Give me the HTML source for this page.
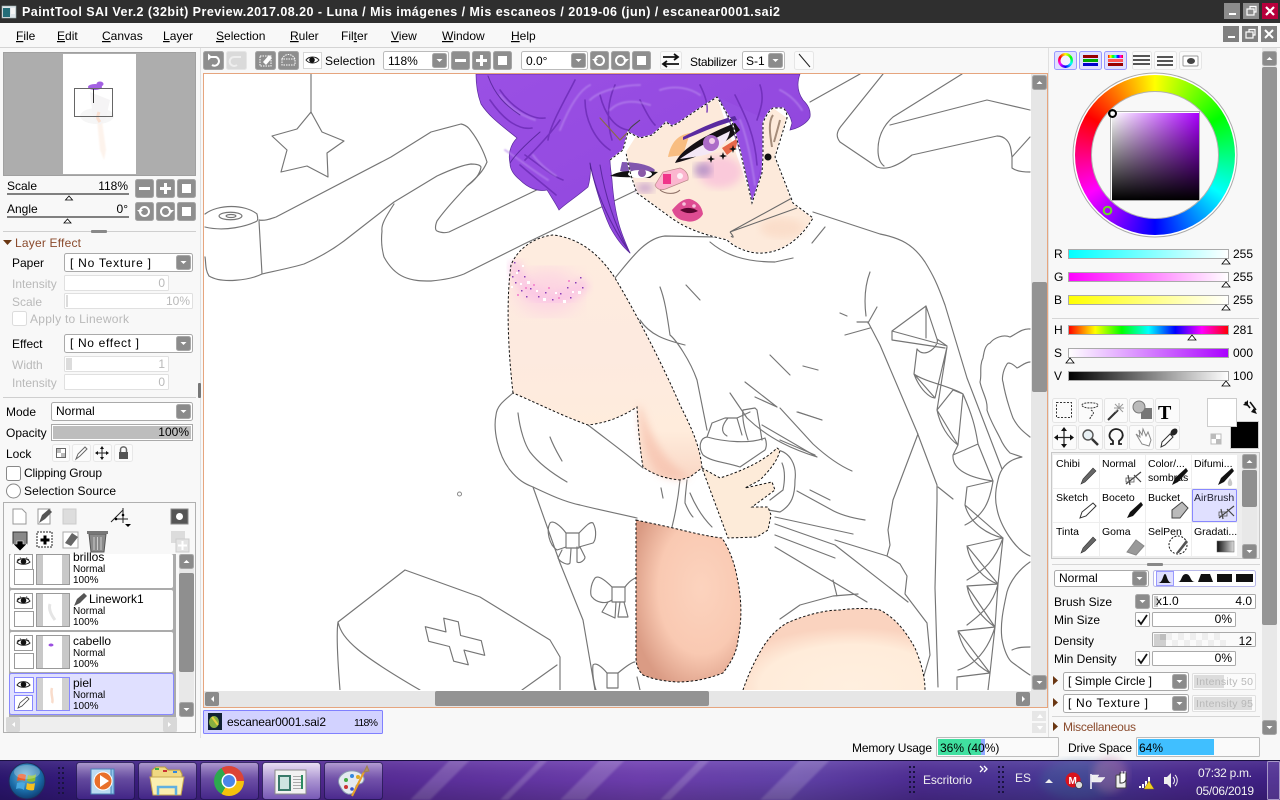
<!DOCTYPE html>
<html><head><meta charset="utf-8"><title>PaintTool SAI</title>
<style>
html,body{margin:0;padding:0;width:1280px;height:800px;overflow:hidden;background:#f8f8f8}
svg{display:block;font-family:"Liberation Sans",sans-serif;font-size:12px}
.g{fill:#b9b9b9}.b{fill:#000}
.line{fill:none;stroke:#757575;stroke-width:1.150;stroke-linecap:round;stroke-linejoin:round}
.u{text-decoration:underline}
.br{font-size:10.5px}
.n{font-size:10px}
</style></head><body>
<svg width="1280" height="800" viewBox="0 0 1280 800" xmlns="http://www.w3.org/2000/svg">
<defs>
<g id="dd"><rect x=".5" y=".5" width="14" height="14" rx="2" fill="#8b8b8b" stroke="#a8a8a8"/><path d="M4.5 6h6l-3 3z" fill="#fff"/></g>
<g id="du"><rect x=".5" y=".5" width="14" height="14" rx="2" fill="#8b8b8b" stroke="#a8a8a8"/><path d="M4.5 9h6l-3-3z" fill="#fff"/></g>
<g id="gb"><rect x=".5" y=".5" width="18" height="18" rx="2" fill="#8e8e8e" stroke="#a5a5a5"/></g>
<g id="eye"><rect x=".5" y=".5" width="18" height="15" fill="#fff" stroke="#9a9a9a"/><path d="M3 8C6 3.500 13 3.500 16 8C13 11 6 11 3 8Z" fill="#fff" stroke="#222"/><circle cx="9.500" cy="7.500" r="2.800" fill="#111"/><path d="M3 6.500L5 5M6 4.500L6.500 3.500M13 4.500L12.500 3.500M15 6L13.500 5" stroke="#222"/></g>
<g id="pen"><path d="M3 18L5 13L15 2L18 5L7 16Z" fill="#666" stroke="#333" stroke-width=".6"/></g>
<g id="air"><path d="M2 16L17 4M6 17L4 7M17 14L10 7" stroke="#444" stroke-width="1.200" fill="none"/><rect x="2" y="10" width="8" height="4" fill="none" stroke="#555" stroke-width=".8"/></g>
<linearGradient id="sq1"><stop offset="0" stop-color="#fff"/><stop offset="1" stop-color="#aa00ff"/></linearGradient>
<linearGradient id="sq2" x2="0" y2="1"><stop offset="0" stop-color="#000" stop-opacity="0"/><stop offset="1" stop-color="#000"/></linearGradient>
<linearGradient id="r"><stop offset="0" stop-color="#0ff"/><stop offset="1" stop-color="#fff"/></linearGradient>
<linearGradient id="gg"><stop offset="0" stop-color="#f0f"/><stop offset="1" stop-color="#fff"/></linearGradient>
<linearGradient id="bb"><stop offset="0" stop-color="#ff0"/><stop offset="1" stop-color="#fff"/></linearGradient>
<linearGradient id="h"><stop offset="0" stop-color="#f00"/><stop offset=".167" stop-color="#ff0"/><stop offset=".333" stop-color="#0f0"/><stop offset=".5" stop-color="#0ff"/><stop offset=".667" stop-color="#00f"/><stop offset=".833" stop-color="#f0f"/><stop offset="1" stop-color="#f00"/></linearGradient>
<linearGradient id="s"><stop offset="0" stop-color="#fff"/><stop offset="1" stop-color="#aa00ff"/></linearGradient>
<linearGradient id="v"><stop offset="0" stop-color="#000"/><stop offset="1" stop-color="#fff"/></linearGradient>
<linearGradient id="grad"><stop offset="0" stop-color="#111"/><stop offset="1" stop-color="#ddd"/></linearGradient>
<linearGradient id="tb" x1="0" x2="1"><stop offset="0" stop-color="#2c1672"/><stop offset=".05" stop-color="#351a7e"/><stop offset=".3" stop-color="#5a2d9c"/><stop offset=".5" stop-color="#7140b4"/><stop offset=".62" stop-color="#6444ae"/><stop offset=".72" stop-color="#4f2d97"/><stop offset=".84" stop-color="#4a3a9a"/><stop offset=".92" stop-color="#4a2890"/><stop offset="1" stop-color="#3f2088"/></linearGradient>
<linearGradient id="tbs" x2="0" y2="1"><stop offset="0" stop-color="#fff" stop-opacity=".1"/><stop offset=".5" stop-color="#000" stop-opacity=".05"/><stop offset="1" stop-color="#000" stop-opacity=".2"/></linearGradient>
<linearGradient id="tbtn" x2="0" y2="1"><stop offset="0" stop-color="#d8c8ea" stop-opacity=".7"/><stop offset=".45" stop-color="#9078c0" stop-opacity=".5"/><stop offset="1" stop-color="#5030a0" stop-opacity=".5"/></linearGradient>
<linearGradient id="tbta" x2="0" y2="1"><stop offset="0" stop-color="#f2eaf8" stop-opacity=".95"/><stop offset=".5" stop-color="#b8a4dc" stop-opacity=".85"/><stop offset="1" stop-color="#8062c0" stop-opacity=".85"/></linearGradient>
<linearGradient id="hairg" x1="0" y1="0" x2="1" y2="1"><stop offset="0" stop-color="#9a50e4"/><stop offset=".5" stop-color="#944ae0"/><stop offset="1" stop-color="#8a42d6"/></linearGradient>
<radialGradient id="thighg" cx=".62" cy=".42" r=".68"><stop offset="0" stop-color="#fcd3be"/><stop offset=".6" stop-color="#f9c9b2"/><stop offset="1" stop-color="#da9b84"/></radialGradient>
<radialGradient id="thigh2" cx=".6" cy=".95" r=".72"><stop offset="0" stop-color="#ffefdf"/><stop offset=".7" stop-color="#ffecda"/><stop offset="1" stop-color="#fad3bf"/></radialGradient>
<linearGradient id="armg" x2="0" y2="1"><stop offset="0" stop-color="#feecdf"/><stop offset=".5" stop-color="#fdeadf"/><stop offset=".8" stop-color="#ffecdc"/><stop offset="1" stop-color="#f9d6c4"/></linearGradient>
<radialGradient id="orb" cx=".45" cy=".35" r=".7"><stop offset="0" stop-color="#70b8d8"/><stop offset=".6" stop-color="#1a6ca8"/><stop offset="1" stop-color="#0c3468"/></radialGradient>
<clipPath id="cv"><rect x="204" y="74" width="827" height="616"/></clipPath>
<filter id="b4"><feGaussianBlur stdDeviation="4"/></filter>
<filter id="b8"><feGaussianBlur stdDeviation="9"/></filter>
<filter id="b1"><feGaussianBlur stdDeviation="1"/></filter>
<filter id="bs"><feGaussianBlur stdDeviation=".7"/></filter>
</defs>

<!-- base -->
<rect width="1280" height="800" fill="#f8f8f8"/>
<!-- title bar -->
<rect width="1280" height="23" fill="#2f2f2f"/>
<rect x="2" y="6" width="14" height="12" fill="#dfe6ea" stroke="#9aa" stroke-width=".6"/><rect x="3" y="8" width="7" height="9" fill="#236d78"/><rect x="11" y="8" width="4" height="6" fill="#f4f4f4"/>
<text x="22" y="16" fill="#fff" font-weight="bold" font-size="12.5" textLength="758">PaintTool SAI Ver.2 (32bit) Preview.2017.08.20 - Luna / Mis imágenes / Mis escaneos / 2019-06 (jun) / escanear0001.sai2</text>
<rect x="1224" y="3" width="16" height="16" fill="#8c8c8c"/><rect x="1229" y="13" width="7" height="2" fill="#fff"/>
<rect x="1243" y="3" width="16" height="16" fill="#8c8c8c"/><rect x="1247" y="9" width="7" height="6" fill="none" stroke="#fff" stroke-width="1.200"/><path d="M1250 9V6.500H1256V12H1254" fill="none" stroke="#fff" stroke-width="1.200"/>
<rect x="1262" y="3" width="16" height="16" fill="#b8003c"/><path d="M1266 7L1274 15M1274 7L1266 15" stroke="#fff" stroke-width="2.200"/>
<!-- menu bar -->
<rect y="23" width="1280" height="24" fill="#f8f8f8"/>
<rect y="47" width="1280" height="1" fill="#d4d4d4"/>
<g font-size="12">
<text x="16" y="40"><tspan class="u">F</tspan>ile</text>
<text x="57" y="40"><tspan class="u">E</tspan>dit</text>
<text x="102" y="40"><tspan class="u">C</tspan>anvas</text>
<text x="163" y="40"><tspan class="u">L</tspan>ayer</text>
<text x="216" y="40"><tspan class="u">S</tspan>election</text>
<text x="290" y="40"><tspan class="u">R</tspan>uler</text>
<text x="341" y="40">Fil<tspan class="u">t</tspan>er</text>
<text x="391" y="40"><tspan class="u">V</tspan>iew</text>
<text x="442" y="40"><tspan class="u">W</tspan>indow</text>
<text x="511" y="40"><tspan class="u">H</tspan>elp</text>
</g>
<rect x="1223" y="26" width="16" height="16" fill="#808080"/><rect x="1228" y="36" width="7" height="2" fill="#fff"/>
<rect x="1242" y="26" width="16" height="16" fill="#808080"/><rect x="1246" y="32" width="7" height="6" fill="none" stroke="#fff" stroke-width="1.200"/><path d="M1249 32V29.500H1255V35H1253" fill="none" stroke="#fff" stroke-width="1.200"/>
<rect x="1261" y="26" width="16" height="16" fill="#808080"/><path d="M1265 30L1273 38M1273 30L1265 38" stroke="#fff" stroke-width="2"/>

<!-- toolbar -->
<g>
<rect x="203.500" y="51.500" width="20" height="18" rx="2" fill="#8e8e8e" stroke="#a5a5a5"/><path d="M208 57H216A4.500 4.500 0 1 1 212 65" fill="none" stroke="#fff" stroke-width="2"/><path d="M208 53.500v7l4-3.500z" fill="#fff"/>
<rect x="226.500" y="51.500" width="20" height="18" rx="2" fill="#dadada" stroke="#e6e6e6"/><path d="M241 57H234A4.500 4.500 0 1 0 237 65" fill="none" stroke="#eee" stroke-width="2"/>
<rect x="255.500" y="51.500" width="20" height="18" rx="2" fill="#8e8e8e" stroke="#a5a5a5"/><rect x="260" y="56" width="11" height="10" fill="none" stroke="#fff" stroke-dasharray="1.500 1"/><path d="M263 62L269 55L272 58L266 65Z" fill="#fff"/>
<rect x="278.500" y="51.500" width="20" height="18" rx="2" fill="#8e8e8e" stroke="#a5a5a5"/><path d="M282 59C285 53 292 53 295 59M282 59V65H295V59Z" fill="none" stroke="#fff" stroke-dasharray="1.500 1"/>
<rect x="303.500" y="52.500" width="18" height="16" fill="#fff" stroke="#d6d6d6"/><path d="M306 60C309 56 316 56 319 60C316 64 309 64 306 60Z" fill="none" stroke="#222"/><circle cx="312" cy="60" r="2.800" fill="#111"/>
<text x="325" y="65" textLength="50">Selection</text>
<rect x="383.500" y="51.500" width="65" height="18" rx="2" fill="#fff" stroke="#bbb"/><text x="388" y="65">118%</text><use href="#dd" x="432" y="53"/>
<use href="#gb" x="451" y="51"/><rect x="455" y="59" width="11" height="3" fill="#fff"/>
<use href="#gb" x="472" y="51"/><path d="M476 59h4v-4h3v4h4v3h-4v4h-3v-4h-4z" fill="#fff"/>
<use href="#gb" x="493" y="51"/><rect x="498" y="56" width="9" height="9" fill="#fff"/>
<rect x="521.500" y="51.500" width="66" height="18" rx="2" fill="#fff" stroke="#bbb"/><text x="526" y="65">0.0°</text><use href="#dd" x="571" y="53"/>
<use href="#gb" x="590" y="51"/><circle cx="599.500" cy="60.500" r="4.500" fill="none" stroke="#fff" stroke-width="2"/><path d="M592 59h6l-3 3z" fill="#fff"/>
<use href="#gb" x="611" y="51"/><circle cx="620.500" cy="60.500" r="4.500" fill="none" stroke="#fff" stroke-width="2"/><path d="M623 59h6l-3 3z" fill="#fff"/>
<use href="#gb" x="632" y="51"/><rect x="637" y="56" width="9" height="9" fill="#fff"/>
<rect x="660.500" y="51.500" width="21" height="18" rx="2" fill="#fbfbfb" stroke="#e6e6e6"/><path d="M663 57H678M674 54L678 57L674 60M664 64H679M667 61L663 64L667 67" fill="none" stroke="#111" stroke-width="1.800"/>
<text x="690" y="66" textLength="47">Stabilizer</text>
<rect x="742.500" y="51.500" width="42" height="18" rx="2" fill="#fff" stroke="#bbb"/><text x="746" y="65">S-1</text><use href="#dd" x="768" y="53"/>
<rect x="794.500" y="51.500" width="19" height="18" rx="2" fill="#fbfbfb" stroke="#e6e6e6"/><path d="M799 54L810 67" stroke="#222"/>
</g>

<!-- canvas -->
<rect x="203.500" y="73.500" width="844" height="634" fill="#fff" stroke="#e6a57e"/>
<g clip-path="url(#cv)">
<!-- line art background -->
<g class="line">
<path d="M311 74V112"/>
<path d="M311 112L322 132L344 141L327 153L328 177L307 166L281 172L287 150L272 136L297 129Z"/>
<path d="M205 214C218 204 245 204 257 214C258 218 258 220 257 221C248 226 225 232 205 227"/>
<path d="M219 216C220 211 241 211 242 216C241 221 220 221 219 216Z"/><path d="M226 216C227 214 235 214 236 216C235 218 227 218 226 216Z"/>
<path d="M259 221L262 274C250 280 222 284 209 276C205 270 206 262 205 257"/>
<path d="M259 220C265 221 270 219 276 217L391 157L431 132L461 124C466 125 469 128 471 131C478 140 484 152 487 162C483 172 476 178 467 186C458 196 446 208 437 221C435 226 435 230 437 231C441 233 445 233 449 232L547 185"/>
<path d="M262 274C275 271 290 268 304 264C318 258 332 250 344 241L394 202L437 176C450 170 462 165 471 164C477 164 480 165 481 167C480 175 474 181 467 186"/>
<path d="M394 204C385 218 381 225 382 231C381 240 382 250 384 257C390 268 397 274 404 277C413 281 422 281 431 281C442 280 454 278 464 274L524 244L637 190"/>
<path d="M615 278C630 260 645 238 665 236L717 237"/>
<path d="M710 242C725 255 745 262 775 262L793 258M812 243L825 227"/>
<path d="M813 212L880 234C900 238 913 244 925 262C933 275 937 283 945 305L967 378L1002 469"/>
<path d="M860 74L810 102M883 74L842 125C836 132 836 137 840 142L877 167C885 170 895 168 912 155L997 136C1005 136 1010 142 1011 150L1012 157L1030 137"/>
<path d="M962 74L893 117C884 125 878 135 878 150C878 158 880 163 884 166M890 125L987 100L1030 110M1012 157V168C1016 171 1022 172 1030 172"/>
<path d="M870 272C865 285 864 300 866 316M877 307L868 323M857 322H868L880 345L917 432L937 485V501L935 588L938 687"/>
<path d="M840 313L847 316M803 366L818 370M798 412L822 420M780 408L813 444C825 455 838 465 852 471M780 440L815 455"/>
<path d="M918 434L893 500L888 530L890 545L887 556"/>
<path d="M938 487L953 499"/>
<path d="M797 491L830 509C840 515 852 518 865 520M810 490L830 500M775 517L853 534M775 524L835 545L908 602M775 535L835 558M775 547L867 602M835 540L887 556L900 564L907 576L905 594L927 623L930 655L922 682"/>
<path d="M780 619L800 605L833 596L858 594M833 580L837 596"/>
<!-- lacing -->
<path d="M892 331L926 306L937 339L947 346L892 331L892 340L945 348M926 306V338M917 349L914 374L935 398L947 347L937 410L953 390L963 394L958 445L937 410C940 425 948 438 958 445L953 455C952 470 970 478 993 481L978 444L953 455M963 394C972 415 975 425 978 444M993 481L967 487L965 505L1003 538L967 546L998 584L967 586L995 627L958 631L990 673L957 677V690M993 481C990 500 985 515 965 525M1003 538C995 560 985 570 967 580M998 584C993 605 980 615 967 625M995 627C988 650 975 665 958 670M965 505C970 525 990 535 1003 538M967 546C970 565 985 580 998 584M967 586C970 605 985 620 995 627M958 631C962 650 975 665 990 673M914 374C925 382 950 386 963 394M917 349C925 360 940 345 937 339M1003 538L998 584L995 627L990 673L988 690M914 374C920 390 930 398 935 398"/>
<!-- flower -->
<path d="M1030 329C1022 328 1015 335 1010 337C1003 334 994 338 990 343C985 345 984 352 983 358C979 366 982 375 980 382C982 392 988 400 987 410C990 420 996 430 1000 438C1003 445 1007 450 1010 453L1022 457C1006 460 1000 470 998 480C994 495 996 505 997 509C1000 525 1015 550 1030 556"/>
<path d="M1030 362C1025 362 1020 367 1017 368C1012 363 1008 362 1007 364C1002 372 1002 380 1003 382C1006 400 1013 418 1013 418C1018 428 1025 433 1030 437M1030 562C1018 570 1010 582 1007 592C1003 610 1000 625 1002 639C1004 650 1008 660 1013 663C1020 668 1025 672 1030 675M1012 650C1018 647 1025 647 1030 647"/>
<!-- lower-left figure lines -->
<path d="M513 393C505 400 497 405 496 415C493 430 498 455 510 470C518 480 525 484 533 487C550 495 565 502 580 505C600 510 620 514 637 518"/>
<path d="M588 425C610 442 628 455 643 468"/>
<path d="M518 413C520 430 525 445 530 452C540 465 555 475 567 482M550 437C555 450 560 457 562 461M661 488L663 498"/>
<path d="M680 480C678 500 675 515 672 527M687 480C686 490 685 497 685 503C688 510 690 514 693 517M690 493C695 505 703 518 712 527"/>
<path d="M533 487L560 563L583 620L595 690"/>
<path d="M566 533H579V548H566Z"/><path d="M566 533C560 525 553 520 550 523C546 530 549 545 557 550L566 547M579 533C585 527 590 521 593 523C597 530 596 540 593 543L579 547"/><path d="M562 550L558 558C560 562 568 566 570 563L571 549M577 547V562C580 564 585 560 585 557L580 547"/>
<path d="M612 587H625V602H612Z"/><path d="M612 587C605 580 598 575 595 578C590 585 590 595 592 597C596 602 605 605 612 600M625 587C630 580 636 577 640 577"/><path d="M608 602L602 612L615 618L616 602M620 602L618 617H628L624 602"/>
<path d="M607 673H618V688H607Z"/><path d="M607 673C602 667 596 662 593 665C592 672 594 685 596 690M618 673C624 668 632 662 635 662"/>
<path d="M637 677L640 690"/>
<path d="M405 570L338 622C336 635 338 665 340 690M405 570L480 597L550 640L560 657V690M338 622C342 640 360 655 420 690M522 690L557 665"/>
<path d="M443.700 618.200L458.300 621.800L460.600 635.500L481.300 640.700L484.700 655.300L464 650.100L468.300 664.800L453.700 661.200L449.400 646.500L428.700 641.300L425.300 626.700L446 631.900Z"/>
<!-- upper-chest lines -->
<path d="M660 287C665 300 667 315 670 335C676 340 690 360 697 380L707 430M640 320C650 335 665 340 685 345M730 393L747 418C770 440 795 450 817 457M745 382L777 407M755 397L777 407M797 412L822 420M762 425L817 457"/>
<path d="M686 285L700 300M770 355L790 375M845 335L870 328"/>
<!-- mug -->
<path d="M703 455C698 447 700 438 707 437C725 442 750 444 765 438C768 445 765 450 765 450L740 467C725 462 712 462 703 455Z"/>
<path d="M707 437L712 423L725 418L737 418L742 435M743 410L755 408L757 410L762 440M737 418L750 412M728 418C722 425 720 432 727 436M743 410C742 418 744 428 748 440"/>
<path d="M777 450C790 452 797 465 795 480C795 495 792 505 780 512L768 510M782 463C785 470 785 480 783 490L770 500"/>
</g>
<!-- skin -->
<path d="M626 152C628 168 634 185 637 193L670 217C685 228 700 233 715 237L727 240C735 248 750 254 763 253C782 252 800 240 813 218L793 203L775 157L787 118L773 108L763 123L763 157L753 203L717 97L640 130Z" fill="#fdeadb"/>
<ellipse cx="720" cy="172" rx="22" ry="16" fill="#fac9da" filter="url(#b4)"/>
<ellipse cx="703" cy="170" rx="9" ry="7" fill="#a685c2" filter="url(#b4)" opacity=".75"/>
<ellipse cx="645" cy="188" rx="9" ry="5" fill="#bb90c8" filter="url(#b4)" opacity=".75"/>
<ellipse cx="782" cy="228" rx="22" ry="10" fill="#f9d6c0" filter="url(#b4)" opacity=".6"/>
<path d="M513 393C508 350 506 300 511 265C518 248 535 237 553 235C580 238 600 255 615 278C640 320 665 370 680 405C690 425 700 445 702 468L690 477L680 480C660 478 650 472 643 467C640 450 638 425 637 407C620 418 605 423 588 425C560 415 535 402 513 393Z" fill="url(#armg)"/>
<ellipse cx="548" cy="292" rx="32" ry="22" fill="#fdd5e2" filter="url(#b8)"/>
<path d="M638 407C640 440 645 460 660 475C675 480 680 480 690 477C660 460 650 430 640 405Z" fill="#f6c0ac" filter="url(#b4)" opacity=".7"/>
<path d="M702 468L720 478C745 470 765 460 777 448L780 450C778 460 770 470 760 480L745 488L772 482L775 490L752 507L768 507L771 515L768 530L757 537L728 538Z" fill="#fdebd9"/>
<path d="M636 520C650 523 660 525 673 528C690 532 705 536 722 538C730 550 735 565 737 577C742 600 742 620 738 640C737 650 733 660 723 673C705 680 690 682 677 682C665 681 655 680 643 675C638 670 636 665 636 657Z" fill="url(#thighg)"/>
<path d="M743 690C748 675 755 660 763 647C770 636 778 628 787 623C805 615 825 610 840 610C855 608 870 608 880 610C895 618 905 630 915 648C920 660 925 675 925 690Z" fill="url(#thigh2)"/>
<!-- hair -->
<path d="M476 74C476 85 478 96 481 104C490 118 505 128 517 138C510 145 508 155 510 163C510 170 515 176 520 180C528 188 538 192 547 190C552 198 556 204 559 210C565 204 575 198 588 187C590 180 591 172 590 163C592 175 600 205 610 227C617 240 624 248 630 253C622 235 615 220 612 180C611 172 610 165 610 160L623 150L628 132L640 138L652 135L660 128L666 122L672 126L678 123L697 110L717 97L732 122L740 150L752 203L762 173L763 157V123C766 115 770 110 773 108H783C788 112 791 118 792 123L790 130C800 128 808 122 810 117C811 110 808 105 803 100C798 93 796 85 800 74Z" fill="url(#hairg)" stroke="#5a2a9c" stroke-width=".7"/>
<path d="M717 97L763 118V157L752 203L740 150L732 122Z" fill="#9650e2"/>
<g fill="none" stroke-linecap="round">
<path d="M490 100C505 122 520 130 532 128M500 90C510 105 530 120 545 118M525 155C540 165 550 175 563 180M520 165C535 178 548 188 556 195M585 100C585 120 595 140 610 150M600 95C605 115 615 128 628 130M640 100C645 110 650 120 655 125M700 85C705 95 708 105 707 112M760 85C765 100 760 110 757 120M560 120C550 135 530 155 525 160M575 80C565 100 550 125 548 140M615 85C608 100 606 120 612 140M735 95C745 115 755 135 757 165" stroke="#6a2ab4" stroke-width="1.600" opacity=".8"/>
<path d="M533 155C540 165 550 172 556 176M505 150C520 160 535 172 548 180M560 130C570 105 580 90 590 85M590 100C600 90 625 85 640 85M660 90C675 85 690 88 700 95M740 120C748 140 752 165 755 185M780 90C790 95 797 102 802 110M500 95C510 108 520 115 535 120M610 110C620 100 635 100 650 105" stroke="#b98aee" stroke-width="2" opacity=".6" filter="url(#bs)"/>
<path d="M488 76C495 95 505 105 520 115M600 165C605 195 615 225 628 250M590 163C595 190 610 225 630 253M510 163C515 155 525 145 540 132M720 100C735 130 745 165 752 203" stroke="#4d2090" stroke-width="1" opacity=".8"/>
<path d="M600 118L620 140L628 132" stroke="#8a6a4a" stroke-width="1.200"/>
</g>
<!-- face details -->
<path d="M622 162C635 162 650 165 655 170L650 178L620 171Z" fill="#6b3ca6" opacity=".85"/>
<path d="M612 175C620 170 640 170 658 172L650 178C635 177 625 178 610 176Z" fill="#111"/>
<ellipse cx="640" cy="174" rx="12" ry="4" fill="#fff"/><circle cx="642" cy="173" r="4" fill="#8a5aa8"/>
<path d="M668 157C671 142 678 135 690 133L683 155Z" fill="#f7b877" opacity=".9"/>
<path d="M675 163C682 148 705 135 735 123L740 130C722 146 700 157 675 163Z" fill="#151015"/>
<path d="M680 159C692 150 712 140 730 131C727 145 716 153 700 156Z" fill="#f4e8f6"/><circle cx="711" cy="143" r="8" fill="#ac6cc8"/><circle cx="712" cy="141" r="3" fill="#f2cde8"/>
<path d="M683 137C700 128 718 120 735 116L737 120C718 125 700 133 683 140Z" fill="#5a2aa0"/>
<path d="M722 148L738 138L736 148L727 155Z" fill="#e2502e" opacity=".85"/>
<g fill="#111"><path d="M711 155L712 158L715 159L712 160L711 163L710 160L707 159L710 158Z"/><path d="M723 152L724 155L727 156L724 157L723 160L722 157L719 156L722 155Z"/><path d="M733 145L734 148L737 149L734 150L733 153L732 150L729 149L732 148Z"/></g>
<path d="M655 185L663 172L680 168C686 170 689 175 688 180L668 188C662 191 657 190 655 185Z" fill="#fbb6cf" stroke="#bb8a8a" stroke-width=".7"/>
<rect x="663" y="174" width="8" height="10" fill="#f0358a"/><circle cx="680" cy="176" r="3" fill="#fff" opacity=".8"/>
<path d="M660 190C665 194 675 195 680 190" fill="none" stroke="#8d6f65" stroke-width="1.100"/>
<path d="M672 210C678 203 684 198 690 199C697 201 702 206 703 214C700 220 692 223 686 221C678 220 674 216 672 210Z" fill="#de4c92"/><path d="M680 210C686 207 692 207 698 211C692 214 686 214 680 210Z" fill="#5a0530"/><circle cx="684" cy="204" r="1.800" fill="#f7c2dc"/><circle cx="694" cy="206" r="1.800" fill="#f7c2dc"/>
<path d="M773 115C768 122 770 135 772 147M780 120C778 128 776 135 774 142" fill="none" stroke="#a58c7a" stroke-width="2"/>
<circle cx="768" cy="157" r="3.500" fill="#111"/>
<path d="M730 232L792 198M730 232L797 208M730 232C735 238 733 238 731 236" fill="none" stroke="#6a6a6a" stroke-width="1.100"/>
<path d="M640 120C634 125 630 127 628 132" fill="none" stroke="#444"/>
<!-- glitter -->
<g>
<path d="M514 262C518 282 530 297 552 299C566 298 578 290 586 282" fill="none" stroke="#fbc4e6" stroke-width="13" filter="url(#b4)" opacity=".7"/>
<g fill="#8c3fb8"><rect x="518" y="270" width="1.500" height="1.500"/><rect x="524" y="276" width="1.500" height="1.500"/><rect x="515" y="282" width="1.500" height="1.500"/><rect x="530" y="288" width="1.500" height="1.500"/><rect x="521" y="290" width="1.500" height="1.500"/><rect x="538" y="296" width="1.500" height="1.500"/><rect x="545" y="292" width="1.500" height="1.500"/><rect x="552" y="299" width="1.500" height="1.500"/><rect x="560" y="293" width="1.500" height="1.500"/><rect x="567" y="287" width="1.500" height="1.500"/><rect x="575" y="282" width="1.500" height="1.500"/><rect x="582" y="287" width="1.500" height="1.500"/><rect x="570" y="297" width="1.500" height="1.500"/><rect x="512" y="276" width="1.500" height="1.500"/><rect x="580" y="277" width="1.500" height="1.500"/><rect x="514" y="262" width="1.500" height="1.500"/><rect x="526" y="296" width="1.500" height="1.500"/></g>
<g fill="#fff"><rect x="520" y="283" width="2" height="2"/><rect x="527" y="281" width="3" height="3"/><rect x="536" y="290" width="2" height="2"/><rect x="543" y="298" width="3" height="3"/><rect x="555" y="292" width="2" height="2"/><rect x="563" y="300" width="3" height="3"/><rect x="572" y="291" width="2" height="2"/><rect x="578" y="291" width="3" height="3"/><rect x="516" y="272" width="2" height="2"/><rect x="511" y="286" width="2" height="2"/><rect x="522" y="265" width="2" height="2"/></g>
<g fill="#f590d0"><rect x="525" y="287" width="2" height="2"/><rect x="533" y="284" width="2" height="2"/><rect x="548" y="287" width="2" height="2"/><rect x="558" y="297" width="2" height="2"/><rect x="568" y="280" width="2" height="2"/><rect x="517" y="294" width="2" height="2"/></g>
</g>
<!-- selection outlines -->
<g fill="none">
<path d="M610 160L623 150L628 132L640 138L652 135L660 128L666 122L672 126L678 123L697 110L717 97L732 122L740 150L752 203L762 173L763 157V123C766 115 770 110 773 108H783C786 110 787 114 787 118L775 157L793 203L813 218C800 240 782 252 763 253C750 254 735 248 727 240L715 237C700 233 685 228 670 217L637 193C634 185 628 168 626 152" stroke="#fff" stroke-width="1.300"/>
<g stroke="#111" stroke-width="1" stroke-dasharray="2.500 2">
<path d="M610 160L623 150L628 132L640 138L652 135L660 128L666 122L672 126L678 123L697 110L717 97L732 122L740 150L752 203L762 173L763 157V123C766 115 770 110 773 108H783C786 110 787 114 787 118L775 157L793 203L813 218C800 240 782 252 763 253C750 254 735 248 727 240L715 237C700 233 685 228 670 217L637 193C634 185 628 168 626 152"/>
<path d="M513 393C508 350 506 300 511 265C518 248 535 237 553 235C580 238 600 255 615 278C640 320 665 370 680 405C690 425 700 445 702 468L690 477L680 480C660 478 650 472 643 467C640 450 638 425 637 407C620 418 605 423 588 425C560 415 535 402 513 393Z"/>
<path d="M702 468L720 478C745 470 765 460 777 448L780 450C778 460 770 470 760 480L745 488L772 482L775 490L752 507L768 507L771 515L768 530L757 537L728 538Z"/>
<path d="M636 520C650 523 660 525 673 528C690 532 705 536 722 538C730 550 735 565 737 577C742 600 742 620 738 640C737 650 733 660 723 673C705 680 690 682 677 682C665 681 655 680 643 675C638 670 636 665 636 657Z"/>
<path d="M743 690C748 675 755 660 763 647C770 636 778 628 787 623C805 615 825 610 840 610C855 608 870 608 880 610C895 618 905 630 915 648C920 660 925 675 925 690"/>
</g>
</g>
<circle cx="459.500" cy="494" r="2" fill="none" stroke="#888"/>
</g>
<!-- canvas scrollbars -->
<rect x="1031" y="74" width="16" height="633" fill="#e6e6e6"/>
<use href="#du" x="1032" y="75"/>
<use href="#dd" x="1032" y="675"/>
<rect x="1032" y="282" width="15" height="110" rx="2" fill="#939393"/>
<rect x="204" y="691" width="843" height="16" fill="#e6e6e6"/>
<rect x="205" y="692" width="14" height="14" rx="2" fill="#8b8b8b"/><path d="M214 696v6l-3-3z" fill="#fff"/>
<rect x="1016" y="692" width="14" height="14" rx="2" fill="#8b8b8b"/><path d="M1022 696v6l3-3z" fill="#fff"/>
<rect x="435" y="691" width="274" height="15" rx="2" fill="#939393"/>
<rect x="1048" y="48" width="1" height="690" fill="#e0e0e0"/>
<rect x="200" y="48" width="1" height="690" fill="#e0e0e0"/>
<rect x="1032" y="711" width="14" height="10" fill="#e6e6e6"/><path d="M1037 718H1043L1040 714Z" fill="#fff"/>
<rect x="1032" y="723" width="14" height="10" fill="#e6e6e6"/><path d="M1037 726H1043L1040 730Z" fill="#fff"/>

<!-- doc tab -->
<rect x="203.500" y="710.500" width="179" height="23" rx="1" fill="#d2d2ff" stroke="#8080ff"/>
<rect x="208" y="713" width="14" height="17" fill="#123"/><ellipse cx="214" cy="722" rx="5" ry="6" fill="#88b040"/><path d="M212 717L218 725" stroke="#e8d040" stroke-width="2"/>
<text x="227" y="726" textLength="99">escanear0001.sai2</text>
<text x="354" y="726" font-size="10.500" textLength="24">118%</text>

<!-- navigator -->
<rect x="3.500" y="52.500" width="192" height="123" fill="#adadad" stroke="#a0a0a0"/>
<rect x="5" y="54" width="190" height="121" fill="#adadad"/>
<rect x="63" y="54" width="73" height="120" fill="#fff"/>
<g opacity=".9">
<ellipse cx="97" cy="116" rx="17" ry="8" fill="#f6f6f6"/>
<path d="M97 118L102 120L103 128L106 150L104 160L100 150L98 130Z" fill="#fdf2ea" filter="url(#bs)"/>
<path d="M90 92L93 118L100 125L106 118L110 100Z" fill="#f4f3f4"/>
<path d="M99 112C97 118 97 118 100 122" stroke="#f9dccb" stroke-width="3" fill="none"/>
<ellipse cx="95" cy="87" rx="7" ry="3" fill="#9a4fe0"/><ellipse cx="100" cy="84" rx="3.500" ry="2.500" fill="#9a4fe0"/>
</g>
<rect x="90" y="88" width="12" height="1" fill="#33cc33"/><rect x="93" y="89" width="1" height="14" fill="#333"/>
<rect x="74.500" y="88.500" width="38" height="28" fill="none" stroke="#666"/>

<text x="7" y="190">Scale</text><text x="128" y="190" text-anchor="end">118%</text>
<rect x="7" y="193" width="122" height="2" fill="#808080"/><path d="M69 196L65.500 200H72.500Z" fill="#fff" stroke="#000" stroke-width=".8"/>
<use href="#gb" x="135" y="179"/><rect x="139" y="187" width="11" height="3" fill="#fff"/>
<use href="#gb" x="156" y="179"/><path d="M160 187h4v-4h3v4h4v3h-4v4h-3v-4h-4z" fill="#fff"/>
<use href="#gb" x="177" y="179"/><rect x="182" y="184" width="9" height="9" fill="#fff"/>
<text x="7" y="213">Angle</text><text x="128" y="213" text-anchor="end">0°</text>
<rect x="7" y="216" width="122" height="2" fill="#808080"/><path d="M67.500 219L64 223H71Z" fill="#fff" stroke="#000" stroke-width=".8"/>
<use href="#gb" x="135" y="202"/><circle cx="144.500" cy="211.500" r="4.500" fill="none" stroke="#fff" stroke-width="2"/><path d="M137 210h6l-3 3z" fill="#fff"/>
<use href="#gb" x="156" y="202"/><circle cx="165.500" cy="211.500" r="4.500" fill="none" stroke="#fff" stroke-width="2"/><path d="M168 210h6l-3 3z" fill="#fff"/>
<use href="#gb" x="177" y="202"/><rect x="182" y="207" width="9" height="9" fill="#fff"/>
<rect x="3" y="231" width="193" height="1" fill="#cfcfcf"/><rect x="91" y="230" width="16" height="3" rx="1" fill="#888"/>

<!-- layer effect -->
<path d="M3 240H12L7.500 245Z" fill="#6a3612"/>
<text x="15" y="247" fill="#8a4a2c" textLength="66">Layer Effect</text>
<text x="12" y="267">Paper</text>
<rect x="64.500" y="253.500" width="128" height="18" rx="2" fill="#fff" stroke="#aaa"/><text x="70" y="267" textLength="81">[ No Texture ]</text><use href="#dd" x="176" y="255"/>
<text x="12" y="288" class="g">Intensity</text><rect x="64.500" y="275.500" width="104" height="15" rx="1" fill="#fff" stroke="#e0e0e0"/><text x="165" y="287" text-anchor="end" class="g">0</text>
<text x="12" y="306" class="g">Scale</text><rect x="64.500" y="293.500" width="128" height="15" rx="1" fill="#fff" stroke="#e0e0e0"/><rect x="66" y="295" width="2" height="12" fill="#dcdcdc"/><text x="190" y="305" text-anchor="end" class="g">10%</text>
<rect x="12.500" y="311.500" width="14" height="14" rx="2" fill="#fff" stroke="#dcdcdc"/><text x="30" y="323" class="g" textLength="99">Apply to Linework</text>
<text x="12" y="348">Effect</text>
<rect x="64.500" y="334.500" width="128" height="18" rx="2" fill="#fff" stroke="#aaa"/><text x="70" y="347" textLength="69">[ No effect ]</text><use href="#dd" x="176" y="336"/>
<text x="12" y="369" class="g">Width</text><rect x="64.500" y="356.500" width="104" height="15" rx="1" fill="#fff" stroke="#e0e0e0"/><rect x="66" y="358" width="6" height="12" fill="#dcdcdc"/><text x="165" y="368" text-anchor="end" class="g">1</text>
<text x="12" y="387" class="g">Intensity</text><rect x="64.500" y="374.500" width="104" height="15" rx="1" fill="#fff" stroke="#e0e0e0"/><text x="165" y="386" text-anchor="end" class="g">0</text>
<rect x="198" y="383" width="3" height="15" rx="1" fill="#777"/>
<rect x="3" y="397" width="193" height="1" fill="#cfcfcf"/>
<text x="6" y="416">Mode</text>
<rect x="51.500" y="402.500" width="141" height="18" rx="2" fill="#fff" stroke="#aaa"/><text x="56" y="415">Normal</text><use href="#dd" x="176" y="404"/>
<text x="6" y="437">Opacity</text>
<rect x="51.500" y="424.500" width="141" height="16" fill="#fff" stroke="#aaa"/><rect x="53" y="426" width="138" height="13" fill="#bdbdbd"/><text x="189" y="436" text-anchor="end">100%</text>
<text x="6" y="458">Lock</text>
<g fill="#fbfbfb" stroke="#e8e8e8"><rect x="52.500" y="444.500" width="17" height="17" rx="2"/><rect x="72.500" y="444.500" width="18" height="17" rx="2"/><rect x="93.500" y="444.500" width="18" height="17" rx="2"/><rect x="114.500" y="444.500" width="18" height="17" rx="2"/></g>
<rect x="56.500" y="448.500" width="9" height="9" fill="#fff" stroke="#666"/><rect x="57" y="449" width="4" height="4" fill="#bbb"/><rect x="61" y="453" width="4" height="4" fill="#bbb"/>
<path d="M76 459L78 454L85 447L87 449L80 456Z" fill="#fff" stroke="#666"/>
<path d="M102 447V459M96 453H108" stroke="#222"/><path d="M102 446L100 449H104ZM102 460L100 457H104ZM95 453L98 451V455ZM109 453L106 451V455Z" fill="#111"/>
<rect x="119" y="452" width="9" height="7" fill="#555"/><path d="M120.500 452V449.500C120.500 446 126.500 446 126.500 449.500V452" fill="none" stroke="#666" stroke-width="1.500"/>
<rect x="6.500" y="466.500" width="14" height="14" rx="2" fill="#fff" stroke="#888"/><text x="24" y="477" textLength="78">Clipping Group</text>
<circle cx="13.500" cy="491" r="7" fill="#fff" stroke="#888"/><text x="24" y="495" textLength="92">Selection Source</text>

<!-- layer panel -->
<rect x="3.500" y="502.500" width="192" height="230" fill="#f8f8f8" stroke="#b0b0b0"/>
<g>
<path d="M13 509H22L26 513V524H13Z" fill="#fff" stroke="#999"/>
<path d="M38 509H50V524H38Z" fill="#fff" stroke="#999"/><path d="M39 523L42 515L49 509L52 512L45 519Z" fill="#555"/>
<path d="M63 509H76V524H63Z" fill="#ddd" stroke="#ccc"/>
<path d="M111 522L123 510M115 519H128M123 508V523" stroke="#222" fill="none"/><circle cx="116" cy="519" r="1.300"/><circle cx="123" cy="515" r="1.300"/><path d="M125 524H131L128 527Z"/>
<rect x="171" y="509" width="17" height="15" fill="#555" stroke="#888"/><circle cx="179.500" cy="516.500" r="3.500" fill="#fff"/>
<rect x="13" y="532" width="14" height="12" fill="#888" stroke="#333"/><path d="M17 541H23V544H27L20 551L13 544H17Z" fill="#000" stroke="#fff" stroke-width=".6"/>
<rect x="37" y="532" width="15" height="15" fill="#fff" stroke="#222" stroke-dasharray="2 1"/><path d="M41 539H44V536H46V539H49V541H46V544H44V541H41Z" fill="#000" stroke="#000"/>
<path d="M63 532H78V548H63Z" fill="#fff" stroke="#aaa"/><path d="M65 543L72 533L78 537L71 546Z" fill="#666"/>
<path d="M89 534H106L104 552H91Z" fill="#8a8a8a" stroke="#555"/><rect x="87" y="531" width="21" height="3" fill="#777"/><path d="M94 537V550M97.500 537V550M101 537V550" stroke="#ccc"/>
<rect x="171" y="531" width="14" height="12" fill="#dcdcdc"/><rect x="176" y="539" width="13" height="13" fill="#e4e4e4" stroke="#ccc"/><path d="M182.500 541V550M178 545.500H187" stroke="#fff" stroke-width="2"/>
</g>
<!-- layer list -->
<rect x="9" y="554" width="167" height="163" fill="#ababab"/>
<rect x="10" y="554" width="163" height="34" rx="2" fill="#fff"/>
<use href="#eye" x="14" y="554"/>
<rect x="14.500" y="569.500" width="19" height="15" fill="#fff" stroke="#9a9a9a"/>
<rect x="36.500" y="554.500" width="33" height="30" fill="#fff" stroke="#999"/><rect x="37" y="555" width="6" height="29" fill="#c8c8c8"/><rect x="62" y="555" width="7" height="29" fill="#c8c8c8"/>
<text x="73" y="561" font-size="12">brillos</text>
<text x="73" y="572" class="n">Normal</text><text x="73" y="583" class="n">100%</text>
<rect x="10" y="590" width="163" height="40" rx="2" fill="#fff"/>
<use href="#eye" x="14" y="593"/>
<rect x="14.500" y="611.500" width="19" height="15" fill="#fff" stroke="#9a9a9a"/>
<rect x="36.500" y="593.500" width="33" height="33" fill="#fff" stroke="#999"/><rect x="37" y="594" width="6" height="32" fill="#c8c8c8"/><rect x="62" y="594" width="7" height="32" fill="#c8c8c8"/><path d="M50 604C48 610 52 616 55 620" stroke="#e5e5e5" stroke-width="3" fill="none"/>
<path d="M74 606L77 599L84 593L87 596L80 603Z" fill="#555"/>
<text x="89" y="603" font-size="12">Linework1</text>
<text x="73" y="614" class="n">Normal</text><text x="73" y="625" class="n">100%</text>
<rect x="10" y="632" width="163" height="40" rx="2" fill="#fff"/>
<use href="#eye" x="14" y="635"/>
<rect x="14.500" y="653.500" width="19" height="15" fill="#fff" stroke="#9a9a9a"/>
<rect x="36.500" y="635.500" width="33" height="33" fill="#fff" stroke="#999"/><rect x="37" y="636" width="6" height="32" fill="#c8c8c8"/><rect x="62" y="636" width="7" height="32" fill="#c8c8c8"/><ellipse cx="51" cy="645" rx="2.500" ry="1.500" fill="#9a4fe0"/>
<text x="73" y="645" font-size="12">cabello</text>
<text x="73" y="656" class="n">Normal</text><text x="73" y="667" class="n">100%</text>
<rect x="9.500" y="673.500" width="164" height="41" rx="2" fill="#e0e0ff" stroke="#8888ff"/>
<g><rect x="14.500" y="677.500" width="19" height="15" fill="#fff" stroke="#8888ff"/><path d="M17 685C20 680.500 27 680.500 30 685C27 688 20 688 17 685Z" fill="#fff" stroke="#222"/><circle cx="23.500" cy="684.500" r="2.800" fill="#111"/></g>
<rect x="14.500" y="695.500" width="18" height="15" fill="#fff" stroke="#8888ff"/><path d="M18 708L20 703L27 697L29 699L22 706Z" fill="#fff" stroke="#444" stroke-width=".8"/>
<rect x="36.500" y="677.500" width="33" height="33" fill="#fff" stroke="#8888ff"/><rect x="37" y="678" width="6" height="32" fill="#d0d0d0"/><rect x="62" y="678" width="7" height="32" fill="#d0d0d0"/><path d="M52 688C50 694 54 700 52 703" stroke="#f9dccb" stroke-width="2.500" fill="none"/>
<text x="73" y="687" font-size="12">piel</text>
<text x="73" y="698" class="n">Normal</text><text x="73" y="709" class="n">100%</text>
<!-- list scroll -->
<rect x="179" y="554" width="15" height="162" fill="#e8e8e8"/>
<use href="#du" x="179" y="554"/>
<rect x="179" y="573" width="15" height="99" rx="2" fill="#8f8f8f"/>
<use href="#dd" x="179" y="702"/>
<rect x="6" y="717" width="171" height="15" fill="#eee"/>
<rect x="6" y="717" width="14" height="15" rx="2" fill="#d8d8d8"/><path d="M15 722v5l-3-2.500z" fill="#fff"/>
<rect x="163" y="717" width="14" height="15" rx="2" fill="#d8d8d8"/><path d="M168 722v5l3-2.500z" fill="#fff"/>

<!-- RIGHT PANEL -->
<rect x="1262" y="48" width="15" height="686" fill="#e8e8e8"/>
<use href="#du" x="1262" y="51"/>
<rect x="1262" y="67" width="15" height="558" rx="2" fill="#959595"/>
<use href="#dd" x="1262" y="720"/>

<!-- colour modes -->
<g fill="#fbfbfb" stroke="#e6e6e6"><rect x="1132.500" y="51.500" width="19" height="18" rx="2"/><rect x="1154.500" y="51.500" width="22" height="18" rx="2"/><rect x="1179.500" y="51.500" width="22" height="18" rx="2"/></g>
<g fill="#e0e0ff" stroke="#9a9aff"><rect x="1054.500" y="51.500" width="22" height="18" rx="2"/><rect x="1079.500" y="51.500" width="22" height="18" rx="2"/><rect x="1104.500" y="51.500" width="22" height="18" rx="2"/></g>
<foreignObject x="1058" y="53" width="15" height="15"><div xmlns="http://www.w3.org/1999/xhtml" style="width:15px;height:15px;border-radius:50%;background:conic-gradient(#ff0,#0f0,#0ff,#00f,#f0f,#f00,#ff0)"></div></foreignObject>
<circle cx="1065.500" cy="60.500" r="5" fill="#f4f2ff"/>
<rect x="1083" y="55" width="15" height="3" fill="#900"/><rect x="1083" y="59" width="15" height="3" fill="#0a0"/><rect x="1083" y="63" width="15" height="3" fill="#00c"/>
<rect x="1108" y="55" width="15" height="3" fill="url(#h)"/><rect x="1108" y="59" width="15" height="3" fill="#f55"/><rect x="1108" y="63" width="15" height="3" fill="#900"/>
<g fill="#555"><rect x="1133" y="55" width="17" height="2"/><rect x="1133" y="59" width="17" height="2"/><rect x="1133" y="63" width="17" height="2"/></g>
<g fill="#555"><rect x="1157" y="56" width="16" height="2"/><rect x="1157" y="60" width="16" height="2"/><rect x="1157" y="64" width="16" height="2"/></g>
<rect x="1183" y="56" width="15" height="10" rx="1" fill="#fff" stroke="#999"/><ellipse cx="1191" cy="61" rx="4" ry="3" fill="#444"/>

<!-- wheel -->
<circle cx="1155" cy="155" r="82" fill="#fff" stroke="#aaa"/>
<foreignObject x="1075" y="75" width="160" height="160"><div xmlns="http://www.w3.org/1999/xhtml" style="width:160px;height:160px;border-radius:50%;background:conic-gradient(#ff0,#0f0,#0ff,#00f,#f0f,#f00,#ff0)"></div></foreignObject>
<circle cx="1155" cy="155" r="63.500" fill="#f8f8f8" stroke="#b0b0b0" stroke-width="1"/>
<rect x="1110.500" y="111.500" width="89" height="89" fill="#fff" stroke="#aaa"/>
<rect x="1112" y="113" width="87" height="87" fill="url(#sq1)"/><rect x="1112" y="113" width="87" height="87" fill="url(#sq2)"/>
<circle cx="1112.500" cy="113.500" r="3.500" fill="none" stroke="#000" stroke-width="2"/>
<circle cx="1107.500" cy="210.500" r="3.800" fill="none" stroke="#66dd22" stroke-width="2"/>

<!-- sliders -->
<g stroke="#aaa">
<rect x="1068.500" y="249.500" width="160" height="9" fill="url(#r)"/>
<rect x="1068.500" y="272.500" width="160" height="9" fill="url(#gg)"/>
<rect x="1068.500" y="295.500" width="160" height="9" fill="url(#bb)"/>
<rect x="1068.500" y="325.500" width="160" height="9" fill="url(#h)"/>
<rect x="1068.500" y="348.500" width="160" height="9" fill="url(#s)"/>
<rect x="1068.500" y="371.500" width="160" height="9" fill="url(#v)"/>
</g>
<g fill="#fff" stroke="#000" stroke-width=".8">
<path d="M1226 259L1222 264H1230Z"/><path d="M1226 282L1222 287H1230Z"/><path d="M1226 305L1222 310H1230Z"/>
<path d="M1192 335L1188 340H1196Z"/><path d="M1070 358L1066 363H1074Z"/><path d="M1226 381L1222 386H1230Z"/>
</g>
<text x="1054" y="258">R</text><text x="1054" y="281">G</text><text x="1054" y="304">B</text><text x="1054" y="334">H</text><text x="1054" y="357">S</text><text x="1054" y="380">V</text>
<text x="1233" y="258">255</text><text x="1233" y="281">255</text><text x="1233" y="304">255</text><text x="1233" y="334">281</text><text x="1233" y="357">000</text><text x="1233" y="380">100</text>
<rect x="1052" y="318" width="207" height="1" fill="#d6d6d6"/>

<!-- tools -->
<g fill="#fbfbfb" stroke="#e4e4e4">
<rect x="1052.500" y="398.500" width="24" height="24" rx="2"/><rect x="1078.500" y="398.500" width="24" height="24" rx="2"/><rect x="1104.500" y="398.500" width="23" height="24" rx="2"/><rect x="1129.500" y="398.500" width="24" height="24" rx="2"/><rect x="1155.500" y="398.500" width="24" height="24" rx="2"/>
<rect x="1052.500" y="425.500" width="24" height="24" rx="2"/><rect x="1078.500" y="425.500" width="24" height="24" rx="2"/><rect x="1104.500" y="425.500" width="23" height="24" rx="2"/><rect x="1129.500" y="425.500" width="24" height="24" rx="2"/><rect x="1155.500" y="425.500" width="24" height="24" rx="2"/>
</g>
<rect x="1056.500" y="402.500" width="15" height="15" fill="none" stroke="#333" stroke-dasharray="2 1.500"/>
<path d="M1082 405C1082 402 1098 402 1098 405C1098 409 1082 409 1082 405ZM1091 410C1097 414 1090 415 1090 419" fill="none" stroke="#333" stroke-dasharray="2 1"/>
<path d="M1108 420L1118 410" stroke="#333" stroke-width="2"/><path d="M1119 403V408M1114 408H1124M1115 404L1123 412M1123 404L1115 412" stroke="#999"/>
<rect x="1141" y="408" width="11" height="11" fill="#777"/><circle cx="1139" cy="407" r="6" fill="#bbb" stroke="#777"/>
<text x="1158" y="419" font-family="Liberation Serif,serif" font-size="20" font-weight="bold">T</text>
<path d="M1064 429V446M1056 437.500H1072" stroke="#222" stroke-width="1.200"/><path d="M1064 427L1061 431H1067ZM1064 448L1061 444H1067ZM1054 437.500L1058 434.500V440.500ZM1074 437.500L1070 434.500V440.500Z" fill="#111"/>
<circle cx="1088" cy="435" r="5" fill="#e8f0f4" stroke="#555" stroke-width="1.400"/><path d="M1092 439L1098 445" stroke="#333" stroke-width="2.500"/>
<path d="M1110 444H1113V441C1106 436 1111 429 1116 429C1122 429 1126 436 1119 441V444H1122" fill="none" stroke="#222" stroke-width="1.800"/>
<path d="M1136 434L1142 444L1149 446L1151 440L1148 432L1146 436L1143 429L1142 435L1139 430L1140 437Z" fill="#fff" stroke="#888"/>
<path d="M1161 447L1162 442L1170 434L1173 437L1165 445Z" fill="#fff" stroke="#333"/><ellipse cx="1174" cy="432" rx="3" ry="4" transform="rotate(45 1174 432)" fill="#222"/>
<rect x="1230.500" y="421.500" width="28" height="27" fill="#000" stroke="#ccc"/>
<rect x="1207.500" y="398.500" width="29" height="28" fill="#fff" stroke="#ccc"/>
<path d="M1245 402L1250 408M1250 402L1256 410" stroke="#111" stroke-width="1.500"/><path d="M1243 405L1248 400V406ZM1254 408L1257 414L1251 412Z" fill="#111"/>
<rect x="1211" y="434" width="10" height="10" fill="#fff" stroke="#bbb"/><rect x="1211" y="434" width="5" height="5" fill="#bbb"/><rect x="1216" y="439" width="5" height="5" fill="#bbb"/>

<!-- brushes -->
<rect x="1051.500" y="452.500" width="208" height="106" fill="#eeeeee" stroke="#c8c8c8"/>
<g fill="#fff"><rect x="1053" y="455" width="46" height="33"/><rect x="1100" y="455" width="45" height="33"/><rect x="1146" y="455" width="45" height="33"/><rect x="1192" y="455" width="45" height="33"/>
<rect x="1053" y="489" width="46" height="33"/><rect x="1100" y="489" width="45" height="33"/><rect x="1146" y="489" width="45" height="33"/>
<rect x="1053" y="523" width="46" height="33"/><rect x="1100" y="523" width="45" height="33"/><rect x="1146" y="523" width="45" height="33"/><rect x="1192" y="523" width="45" height="33"/></g>
<rect x="1192.500" y="489.500" width="44" height="32" rx="1" fill="#e0e0ff" stroke="#8888ff"/>
<g class="br">
<text x="1056" y="467">Chibi</text><text x="1102" y="467">Normal</text><text x="1148" y="467">Color/...</text><text x="1148" y="481">sombras</text><text x="1194" y="467">Difumi...</text>
<text x="1056" y="501">Sketch</text><text x="1102" y="501">Boceto</text><text x="1148" y="501">Bucket</text><text x="1194" y="501" fill="#223">AirBrush</text>
<text x="1056" y="535">Tinta</text><text x="1102" y="535">Goma</text><text x="1148" y="535">SelPen</text><text x="1194" y="535">Gradati...</text>
</g>
<use href="#pen" x="1078" y="466"/>
<use href="#air" x="1124" y="468"/>
<path d="M1172 485L1175 478L1186 468L1188 471L1178 482Z" fill="#111"/>
<path d="M1218 485L1221 478L1232 468L1234 471L1224 482Z" fill="#111"/><path d="M1230 478C1227 482 1227 486 1230 486C1233 486 1233 482 1230 478Z" fill="#c8c8c8"/>
<path d="M1080 518L1082 512L1093 503L1096 506L1086 516Z" fill="#fff" stroke="#333"/>
<path d="M1127 518L1130 512L1141 502L1143 505L1133 516Z" fill="#111"/>
<path d="M1172 518H1180L1188 508L1182 502L1172 510Z" fill="#bbb" stroke="#444"/>
<use href="#air" x="1217" y="502"/>
<use href="#pen" x="1078" y="535"/>
<path d="M1127 552L1136 540L1144 546L1136 555Z" fill="#999" stroke="#888"/>
<circle cx="1178" cy="545" r="9" fill="none" stroke="#111" stroke-dasharray="2 1.500"/><path d="M1176 553L1186 540L1188 542L1179 553Z" fill="#555"/>
<rect x="1217" y="541" width="17" height="11" fill="url(#grad)" stroke="#666" stroke-width=".5"/>
<rect x="1242" y="454" width="15" height="104" fill="#e8e8e8"/>
<use href="#du" x="1242" y="454"/>
<rect x="1242" y="470" width="15" height="37" rx="2" fill="#8f8f8f"/>
<use href="#dd" x="1242" y="544"/>

<!-- brush settings -->
<rect x="1052" y="564" width="208" height="1" fill="#d6d6d6"/><rect x="1147" y="563" width="16" height="3" rx="1" fill="#888"/>
<rect x="1054.500" y="570.500" width="94" height="16" rx="2" fill="#fff" stroke="#aaa"/><text x="1059" y="582">Normal</text><use href="#dd" x="1132" y="571"/>
<rect x="1153.500" y="570.500" width="102" height="16" rx="2" fill="#fff" stroke="#b8b8e8"/>
<rect x="1156.500" y="571.500" width="17" height="14" fill="#e0e0ff" stroke="#9a9aff"/>
<path d="M1158 583C1163 583 1163 574 1165 574C1167 574 1167 583 1172 583Z" fill="#111"/>
<path d="M1178 582C1182 582 1181 574 1186 574C1191 574 1190 582 1195 582Z" fill="#111"/>
<path d="M1198 582L1201 574H1210L1213 582Z" fill="#111"/>
<rect x="1217" y="574" width="15" height="8" fill="#111"/><rect x="1236" y="574" width="17" height="8" fill="#111"/>
<text x="1054" y="606">Brush Size</text><use href="#dd" x="1135" y="594"/>
<rect x="1152.500" y="594.500" width="103" height="14" rx="1" fill="#fff" stroke="#aaa"/><rect x="1154" y="596" width="4" height="11" fill="#c8c8c8"/><text x="1156" y="605">x1.0</text><text x="1252" y="605" text-anchor="end">4.0</text>
<text x="1054" y="624">Min Size</text><rect x="1135.500" y="612.500" width="14" height="14" rx="1" fill="#fff" stroke="#aaa"/><path d="M1138 620L1141 624L1147 615" fill="none" stroke="#111" stroke-width="1.800"/>
<rect x="1152.500" y="612.500" width="83" height="14" rx="1" fill="#fff" stroke="#aaa"/><text x="1232" y="623" text-anchor="end">0%</text>
<text x="1054" y="645">Density</text>
<rect x="1152.500" y="632.500" width="103" height="14" rx="1" fill="#fafafa" stroke="#aaa"/>
<g fill="#eee"><rect x="1166" y="633" width="6" height="7"/><rect x="1178" y="633" width="6" height="7"/><rect x="1190" y="633" width="6" height="7"/><rect x="1202" y="633" width="6" height="7"/><rect x="1214" y="633" width="6" height="7"/><rect x="1172" y="640" width="6" height="6"/><rect x="1184" y="640" width="6" height="6"/><rect x="1196" y="640" width="6" height="6"/><rect x="1208" y="640" width="6" height="6"/><rect x="1220" y="640" width="6" height="6"/></g>
<rect x="1154" y="634" width="12" height="12" fill="#cfcfcf"/><rect x="1160" y="634" width="6" height="6" fill="#bdbdbd"/>
<text x="1252" y="645" text-anchor="end">12</text>
<text x="1054" y="663">Min Density</text><rect x="1135.500" y="651.500" width="14" height="14" rx="1" fill="#fff" stroke="#aaa"/><path d="M1138 659L1141 663L1147 654" fill="none" stroke="#111" stroke-width="1.800"/>
<rect x="1152.500" y="651.500" width="83" height="14" rx="1" fill="#fff" stroke="#aaa"/><text x="1232" y="662" text-anchor="end">0%</text>
<path d="M1053 676L1058 680.500L1053 685Z" fill="#6a3612"/>
<rect x="1063.500" y="672.500" width="125" height="18" rx="2" fill="#fff" stroke="#aaa"/><text x="1068" y="685" textLength="84">[ Simple Circle ]</text><use href="#dd" x="1172" y="674"/>
<rect x="1192.500" y="673.500" width="63" height="16" rx="1" fill="#fbfbfb" stroke="#e0e0e0"/><rect x="1194" y="675" width="30" height="13" fill="#dcdcdc"/><text x="1196" y="685" font-size="10.500" fill="#b8b8b8" textLength="57">Intensity 50</text>
<path d="M1053 698L1058 702.500L1053 707Z" fill="#6a3612"/>
<rect x="1063.500" y="694.500" width="125" height="18" rx="2" fill="#fff" stroke="#aaa"/><text x="1068" y="707" textLength="80">[ No Texture ]</text><use href="#dd" x="1172" y="696"/>
<rect x="1192.500" y="695.500" width="63" height="16" rx="1" fill="#fbfbfb" stroke="#e0e0e0"/><rect x="1194" y="697" width="58" height="13" fill="#dcdcdc"/><text x="1196" y="707" font-size="10.500" fill="#b8b8b8" textLength="57">Intensity 95</text>
<rect x="1052" y="716" width="208" height="1" fill="#d6d6d6"/>
<path d="M1053 722L1058 726.500L1053 731Z" fill="#6a3612"/>
<text x="1063" y="731" fill="#8a4a2c" textLength="73">Miscellaneous</text>

<!-- status -->
<text x="852" y="752" textLength="80">Memory Usage</text>
<rect x="936.500" y="737.500" width="122" height="19" rx="1" fill="#fafafa" stroke="#bbb"/><rect x="938" y="739" width="43" height="16" fill="#40e0a0"/><rect x="981" y="739" width="4" height="16" fill="#8ea8ff"/><text x="940" y="752">36% (40%)</text>
<text x="1068" y="752" textLength="64">Drive Space</text>
<rect x="1136.500" y="737.500" width="123" height="19" rx="1" fill="#fafafa" stroke="#bbb"/><rect x="1138" y="739" width="76" height="16" fill="#40bfff"/><text x="1139" y="752">64%</text>

<!-- taskbar -->
<rect y="760" width="1280" height="40" fill="url(#tb)"/>
<g opacity=".18" fill="#fff" filter="url(#b1)"><path d="M410 800L450 760H470L430 800Z"/><path d="M500 800L540 760H548L508 800Z"/><path d="M560 800L600 760H625L585 800Z"/><path d="M660 800L700 760H710L670 800Z"/><path d="M760 800L800 760H830L790 800Z"/></g>
<ellipse cx="1080" cy="780" rx="40" ry="20" fill="#3f6aa0" opacity=".35" filter="url(#b4)"/>
<ellipse cx="1110" cy="775" rx="18" ry="18" fill="#b87ca8" opacity=".4" filter="url(#b4)"/>
<rect y="760" width="1280" height="40" fill="url(#tbs)"/>
<rect y="760" width="1280" height="1" fill="#1a1040"/>
<circle cx="27" cy="781" r="18" fill="url(#orb)" stroke="#22285a" stroke-width="1"/>
<path d="M18 775C21 773 24 774 26 775L25 781C23 780 20 780 17 781Z" fill="#e85a28"/><path d="M28 775C31 776 34 776 36 774L35 781C33 782 30 782 27 781Z" fill="#8cc030"/>
<path d="M17 783C20 782 23 782 25 783L24 790C21 788 19 788 16 789Z" fill="#48a8e0"/><path d="M27 783C30 784 33 784 35 783L34 790C31 791 28 790 26 789Z" fill="#f4c020"/>
<ellipse cx="27" cy="772" rx="13" ry="7" fill="#fff" opacity=".25"/>
<g fill="#1a1440"><rect x="58" y="767" width="2" height="2"/><rect x="62" y="767" width="2" height="2"/><rect x="58" y="772" width="2" height="2"/><rect x="62" y="772" width="2" height="2"/><rect x="58" y="777" width="2" height="2"/><rect x="62" y="777" width="2" height="2"/><rect x="58" y="782" width="2" height="2"/><rect x="62" y="782" width="2" height="2"/><rect x="58" y="787" width="2" height="2"/><rect x="62" y="787" width="2" height="2"/><rect x="58" y="792" width="2" height="2"/><rect x="62" y="792" width="2" height="2"/></g>
<g stroke="#1d1448" stroke-opacity=".7">
<rect x="76.500" y="762.500" width="58" height="37" rx="3" fill="url(#tbtn)"/>
<rect x="138.500" y="762.500" width="58" height="37" rx="3" fill="url(#tbtn)"/>
<rect x="200.500" y="762.500" width="58" height="37" rx="3" fill="url(#tbtn)"/>
<rect x="262.500" y="762.500" width="58" height="37" rx="3" fill="url(#tbta)"/>
<rect x="324.500" y="762.500" width="58" height="37" rx="3" fill="url(#tbtn)"/>
</g>
<!-- media player -->
<rect x="94" y="769" width="20" height="25" fill="#8fc4ea" stroke="#4a84b8"/><rect x="91" y="769" width="20" height="25" fill="#bcdcf2" stroke="#4a84b8"/>
<circle cx="103" cy="781" r="9" fill="#e8702a" stroke="#fff"/><path d="M100 775L109 781L100 787Z" fill="#fff"/>
<!-- folder -->
<path d="M152 770L156 767H165L168 770H180L182 774V790H152Z" fill="#f0d882" stroke="#b89c44"/>
<rect x="155" y="768" width="4" height="2" fill="#3cb044"/><rect x="163" y="770" width="4" height="2" fill="#cc3333"/><rect x="173" y="771" width="4" height="2" fill="#3388dd"/>
<path d="M150 777H184L181 795H153Z" fill="#fbeeb0" stroke="#c8a850"/>
<path d="M158 795V787H176V795" fill="none" stroke="#60b0e0" stroke-width="2.500"/>
<!-- chrome -->
<foreignObject x="214" y="766" width="30" height="30"><div xmlns="http://www.w3.org/1999/xhtml" style="width:30px;height:30px;border-radius:50%;background:conic-gradient(#db4437 0deg 90deg,#f4c20d 90deg 210deg,#2da94f 210deg 330deg,#db4437 330deg 360deg)"></div></foreignObject>
<circle cx="229" cy="781" r="7.500" fill="#fff"/><circle cx="229" cy="781" r="6" fill="#4a86e8"/>
<!-- window icon -->
<rect x="275" y="770" width="31" height="24" fill="#f2f2f2" stroke="#8a8a8a"/><rect x="278" y="775" width="13" height="16" fill="#3a7a6a"/><rect x="280" y="777" width="9" height="12" fill="#cfe4e0"/>
<g fill="#aaa"><rect x="293" y="776" width="8" height="1"/><rect x="293" y="779" width="8" height="1"/><rect x="293" y="782" width="8" height="1"/><rect x="293" y="785" width="8" height="1"/><rect x="293" y="788" width="8" height="1"/></g><rect x="301" y="775" width="2" height="14" fill="#2a8a60"/>
<!-- palette -->
<path d="M340 786C335 778 344 770 354 771C362 772 366 778 363 782C361 785 357 783 356 786C355 790 354 795 348 794C344 793 342 790 340 786Z" fill="#e4eaf0" stroke="#8a9ab0"/>
<circle cx="346" cy="787" r="2" fill="#cc3333"/><circle cx="346" cy="780" r="2" fill="#44aa44"/><circle cx="352" cy="776" r="2" fill="#3388dd"/><circle cx="358" cy="777" r="2" fill="#ddaa22"/><circle cx="352" cy="789" r="1.800" fill="#3355cc"/>
<path d="M352 796L364 772" stroke="#e8a028" stroke-width="2"/><path d="M364 772L367 766L369 771Z" fill="#b09060" stroke="#a08050"/>

<!-- tray -->
<g fill="#1a1440"><rect x="909" y="766" width="2" height="2"/><rect x="913" y="766" width="2" height="2"/><rect x="909" y="771" width="2" height="2"/><rect x="913" y="771" width="2" height="2"/><rect x="909" y="776" width="2" height="2"/><rect x="913" y="776" width="2" height="2"/><rect x="909" y="781" width="2" height="2"/><rect x="913" y="781" width="2" height="2"/><rect x="909" y="786" width="2" height="2"/><rect x="913" y="786" width="2" height="2"/><rect x="909" y="791" width="2" height="2"/><rect x="913" y="791" width="2" height="2"/>
<rect x="998" y="766" width="2" height="2"/><rect x="1002" y="766" width="2" height="2"/><rect x="998" y="771" width="2" height="2"/><rect x="1002" y="771" width="2" height="2"/><rect x="998" y="776" width="2" height="2"/><rect x="1002" y="776" width="2" height="2"/><rect x="998" y="781" width="2" height="2"/><rect x="1002" y="781" width="2" height="2"/><rect x="998" y="786" width="2" height="2"/><rect x="1002" y="786" width="2" height="2"/><rect x="998" y="791" width="2" height="2"/><rect x="1002" y="791" width="2" height="2"/></g>
<text x="923" y="784" fill="#eee" textLength="49">Escritorio</text>
<path d="M980 766L983 769L980 772M984 766L987 769L984 772" fill="none" stroke="#fff" stroke-width="1.300"/>
<text x="1015" y="782" fill="#eee">ES</text>
<path d="M1045 783L1049 779L1053 783Z" fill="#eee"/>
<circle cx="1073" cy="780" r="7.500" fill="#d8121c"/><text x="1068.500" y="784" fill="#fff" font-size="10" font-weight="bold">M</text><circle cx="1079" cy="785" r="3.500" fill="#ddd" stroke="#333" stroke-width=".6"/>
<path d="M1091 774V789" stroke="#fff" stroke-width="1.500"/><path d="M1092 775H1099L1097 777.500L1105 777.500L1101 782H1092Z" fill="#eee" stroke="#fff" stroke-width=".5"/>
<rect x="1116" y="775" width="10" height="13" rx="1" fill="#eee" stroke="#444"/><path d="M1120 773H1126V779C1126 781 1124 783 1122 783H1120Z" fill="#fff" stroke="#333"/><path d="M1122 771V775M1125 771V775" stroke="#fff"/>
<g fill="#fff"><rect x="1139" y="786" width="2" height="2"/><rect x="1142" y="784" width="2" height="4"/><rect x="1145" y="781" width="2" height="7"/><rect x="1148" y="777" width="2" height="11"/></g>
<path d="M1149 781L1154 789H1144Z" fill="#f0d020" stroke="#8a7010" stroke-width=".5"/>
<path d="M1164 777H1167L1171 773V788L1167 784H1164Z" fill="#eee"/><path d="M1173 777C1175 779 1175 782 1173 784M1175 775C1178 778 1178 783 1175 786" fill="none" stroke="#eee"/>
<text x="1225" y="777" fill="#f2f2f2" text-anchor="middle" textLength="54">07:32 p.m.</text>
<text x="1225" y="795" fill="#f2f2f2" text-anchor="middle" textLength="58">05/06/2019</text>
<rect x="1267.500" y="761.500" width="12" height="38" rx="1" fill="#8060b8" fill-opacity=".35" stroke="#a898c8"/>
</svg>
</body></html>
